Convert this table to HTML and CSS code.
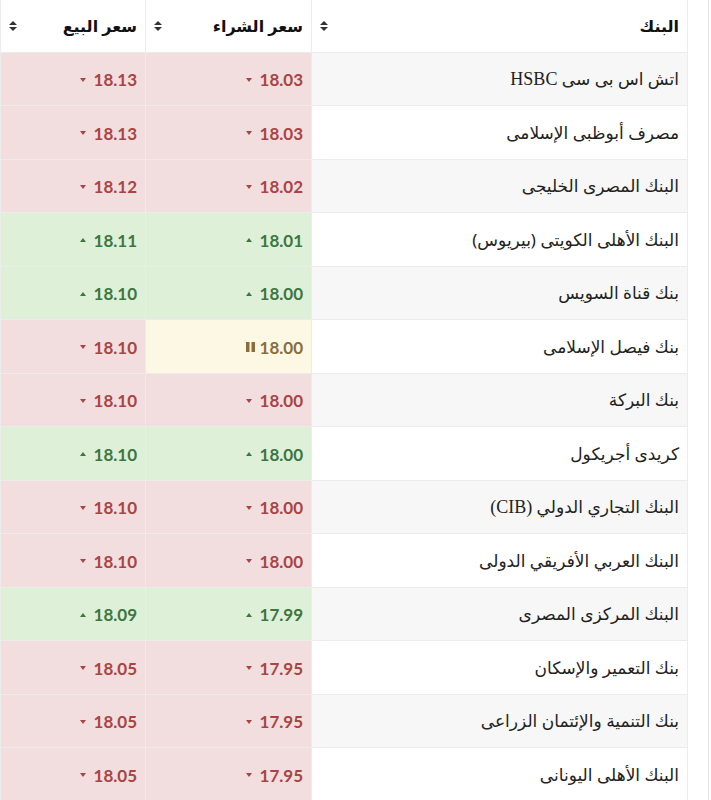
FILE: index.html
```html
<!DOCTYPE html>
<html lang="ar">
<head>
<meta charset="utf-8">
<link rel="stylesheet" href="styles.css">
</head>
<body>
<div class="frame">
<table class="rates" dir="rtl">
<colgroup><col class="c-bank"><col class="c-buy"><col class="c-sell"></colgroup>
<thead>
<tr>
<th><div class="th-in"><span>البنك</span><svg class="sort" width="8" height="10" viewBox="0 0 8 10"><path d="M4 0L8 4H0Z M0 6H8L4 10Z" fill="#333"/></svg></div></th>
<th><div class="th-in"><span>سعر الشراء</span><svg class="sort" width="8" height="10" viewBox="0 0 8 10"><path d="M4 0L8 4H0Z M0 6H8L4 10Z" fill="#333"/></svg></div></th>
<th><div class="th-in"><span>سعر البيع</span><svg class="sort" width="8" height="10" viewBox="0 0 8 10"><path d="M4 0L8 4H0Z M0 6H8L4 10Z" fill="#333"/></svg></div></th>
</tr>
</thead>
<tbody>
<tr><td class="bank">اتش اس بى سى <span class="lat">HSBC</span></td><td class="dn"><span class="v">18.03</span><svg class="car" width="6" height="4" viewBox="0 0 6 4"><path d="M0 0H6L3 4Z"/></svg></td><td class="dn"><span class="v">18.13</span><svg class="car" width="6" height="4" viewBox="0 0 6 4"><path d="M0 0H6L3 4Z"/></svg></td></tr>
<tr><td class="bank">مصرف أبوظبى الإسلامى</td><td class="dn"><span class="v">18.03</span><svg class="car" width="6" height="4" viewBox="0 0 6 4"><path d="M0 0H6L3 4Z"/></svg></td><td class="dn"><span class="v">18.13</span><svg class="car" width="6" height="4" viewBox="0 0 6 4"><path d="M0 0H6L3 4Z"/></svg></td></tr>
<tr><td class="bank">البنك المصرى الخليجى</td><td class="dn"><span class="v">18.02</span><svg class="car" width="6" height="4" viewBox="0 0 6 4"><path d="M0 0H6L3 4Z"/></svg></td><td class="dn"><span class="v">18.12</span><svg class="car" width="6" height="4" viewBox="0 0 6 4"><path d="M0 0H6L3 4Z"/></svg></td></tr>
<tr><td class="bank">البنك الأهلى الكويتى (بيريوس)</td><td class="up"><span class="v">18.01</span><svg class="car" width="6" height="4" viewBox="0 0 6 4"><path d="M3 0L6 4H0Z"/></svg></td><td class="up"><span class="v">18.11</span><svg class="car" width="6" height="4" viewBox="0 0 6 4"><path d="M3 0L6 4H0Z"/></svg></td></tr>
<tr><td class="bank">بنك قناة السويس</td><td class="up"><span class="v">18.00</span><svg class="car" width="6" height="4" viewBox="0 0 6 4"><path d="M3 0L6 4H0Z"/></svg></td><td class="up"><span class="v">18.10</span><svg class="car" width="6" height="4" viewBox="0 0 6 4"><path d="M3 0L6 4H0Z"/></svg></td></tr>
<tr><td class="bank">بنك فيصل الإسلامى</td><td class="eq"><span class="v">18.00</span><svg class="pause" width="9" height="10" viewBox="0 0 9 10"><path d="M0 0H3.5V10H0Z M5.5 0H9V10H5.5Z"/></svg></td><td class="dn"><span class="v">18.10</span><svg class="car" width="6" height="4" viewBox="0 0 6 4"><path d="M0 0H6L3 4Z"/></svg></td></tr>
<tr><td class="bank">بنك البركة</td><td class="dn"><span class="v">18.00</span><svg class="car" width="6" height="4" viewBox="0 0 6 4"><path d="M0 0H6L3 4Z"/></svg></td><td class="dn"><span class="v">18.10</span><svg class="car" width="6" height="4" viewBox="0 0 6 4"><path d="M0 0H6L3 4Z"/></svg></td></tr>
<tr><td class="bank">كريدى أجريكول</td><td class="up"><span class="v">18.00</span><svg class="car" width="6" height="4" viewBox="0 0 6 4"><path d="M3 0L6 4H0Z"/></svg></td><td class="up"><span class="v">18.10</span><svg class="car" width="6" height="4" viewBox="0 0 6 4"><path d="M3 0L6 4H0Z"/></svg></td></tr>
<tr><td class="bank">البنك التجاري الدولي <span class="lat">(CIB)</span></td><td class="dn"><span class="v">18.00</span><svg class="car" width="6" height="4" viewBox="0 0 6 4"><path d="M0 0H6L3 4Z"/></svg></td><td class="dn"><span class="v">18.10</span><svg class="car" width="6" height="4" viewBox="0 0 6 4"><path d="M0 0H6L3 4Z"/></svg></td></tr>
<tr><td class="bank">البنك العربي الأفريقي الدولى</td><td class="dn"><span class="v">18.00</span><svg class="car" width="6" height="4" viewBox="0 0 6 4"><path d="M0 0H6L3 4Z"/></svg></td><td class="dn"><span class="v">18.10</span><svg class="car" width="6" height="4" viewBox="0 0 6 4"><path d="M0 0H6L3 4Z"/></svg></td></tr>
<tr><td class="bank">البنك المركزى المصرى</td><td class="up"><span class="v">17.99</span><svg class="car" width="6" height="4" viewBox="0 0 6 4"><path d="M3 0L6 4H0Z"/></svg></td><td class="up"><span class="v">18.09</span><svg class="car" width="6" height="4" viewBox="0 0 6 4"><path d="M3 0L6 4H0Z"/></svg></td></tr>
<tr><td class="bank">بنك التعمير والإسكان</td><td class="dn"><span class="v">17.95</span><svg class="car" width="6" height="4" viewBox="0 0 6 4"><path d="M0 0H6L3 4Z"/></svg></td><td class="dn"><span class="v">18.05</span><svg class="car" width="6" height="4" viewBox="0 0 6 4"><path d="M0 0H6L3 4Z"/></svg></td></tr>
<tr><td class="bank">بنك التنمية والإئتمان الزراعى</td><td class="dn"><span class="v">17.95</span><svg class="car" width="6" height="4" viewBox="0 0 6 4"><path d="M0 0H6L3 4Z"/></svg></td><td class="dn"><span class="v">18.05</span><svg class="car" width="6" height="4" viewBox="0 0 6 4"><path d="M0 0H6L3 4Z"/></svg></td></tr>
<tr><td class="bank">البنك الأهلى اليونانى</td><td class="dn"><span class="v">17.95</span><svg class="car" width="6" height="4" viewBox="0 0 6 4"><path d="M0 0H6L3 4Z"/></svg></td><td class="dn"><span class="v">18.05</span><svg class="car" width="6" height="4" viewBox="0 0 6 4"><path d="M0 0H6L3 4Z"/></svg></td></tr>
</tbody>
</table>
</div>
</body>
</html>
```
FILE: styles.css
```css
html, body {
  margin: 0;
  padding: 0;
  background: #fff;
}
body {
  font-family: "Noto Sans", "DejaVu Sans", sans-serif;
  color: #333;
  overflow: hidden;
}
.frame {
  width: 708px;
  height: 800px;
  border-right: 1px solid #e3e3e3;
}
.rates {
  width: 687px;
  border-collapse: collapse;
  table-layout: fixed;
}
.c-bank { width: 376px; }
.c-buy { width: 166px; }
.c-sell { width: 145px; }
.rates th, .rates td {
  border: 1px solid #ececec;
  padding: 0 8px;
  text-align: right;
  vertical-align: middle;
}
.rates thead tr { height: 52px; }
.rates tbody tr { height: 53.5px; }
.rates th {
  font-size: 16px;
  font-weight: bold;
  color: #111;
  border-top: none;
}
.th-in {
  display: flex;
  justify-content: space-between;
  align-items: center;
}
.sort { display: block; }
.rates tbody tr:nth-child(odd) td.bank { background: #f7f7f7; }
.bank {
  font-size: 17px;
  color: #222;
}
.lat {
  font-family: "Liberation Serif", serif;
  font-size: 18px;
}
.rates td.dn, .rates td.up, .rates td.eq {
  font-family: Lato, sans-serif;
  font-weight: bold;
  font-size: 17px;
  white-space: nowrap;
}
.v { display: inline-block; vertical-align: middle; }
.car { display: inline-block; vertical-align: middle; margin-right: 8px; }
.pause { display: inline-block; vertical-align: middle; margin-right: 5px; }
.dn { background: #f2dede; color: #a94442; }
.dn svg { fill: #a94442; }
.up { background: #dff0d8; color: #3c763d; }
.up svg { fill: #3c763d; }
.eq { background: #fcf8e3; color: #8a6d3b; }
.eq svg { fill: #8a6d3b; }
```
